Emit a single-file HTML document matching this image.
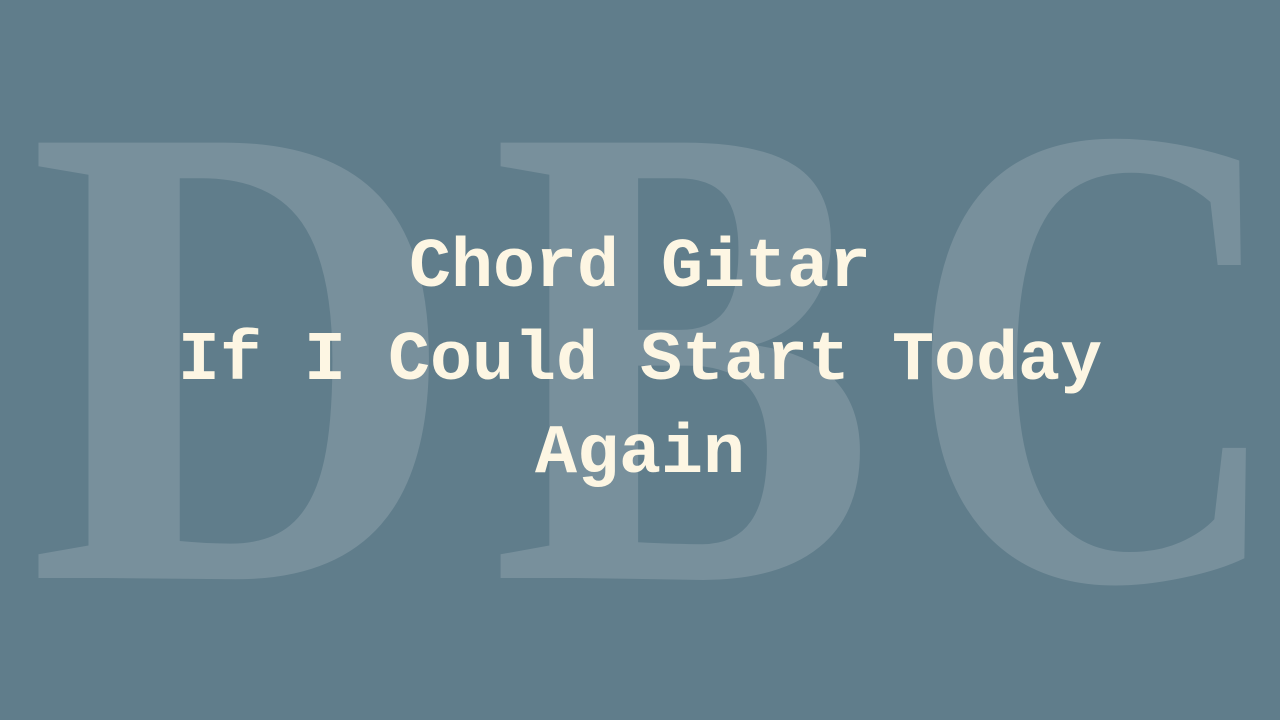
<!DOCTYPE html>
<html><head><meta charset="utf-8"><style>
html,body{margin:0;padding:0;width:1280px;height:720px;overflow:hidden;background:#607d8b}
svg{position:absolute;left:0;top:0}
.t{position:absolute;left:0;width:1280px;top:222px;text-align:center;font-family:"Liberation Mono",monospace;font-weight:bold;font-size:70px;line-height:93px;color:#fdf6e3}
</style></head><body>
<svg width="1280" height="720">
<g fill="#78909c" font-family="Liberation Serif,serif" font-weight="bold" font-size="665">
<text x="28" y="578" textLength="430" lengthAdjust="spacingAndGlyphs">D</text>
<text x="491" y="578" textLength="385" lengthAdjust="spacingAndGlyphs">B</text>
<text x="906" y="579" textLength="380" lengthAdjust="spacingAndGlyphs">C</text>
</g></svg>
<div class="t">Chord Gitar<br>If I Could Start Today<br>Again</div>
</body></html>
